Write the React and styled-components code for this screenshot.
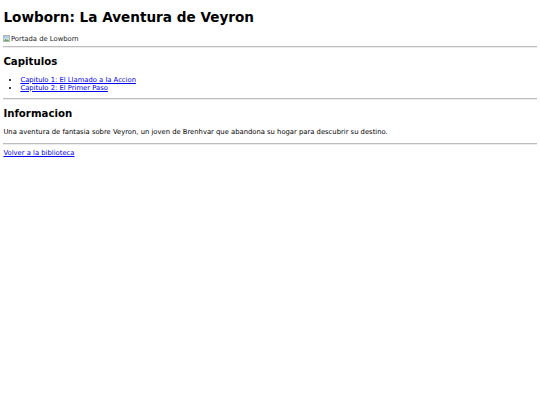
import React from "react";
import styled, { createGlobalStyle } from "styled-components";

// everything is the browser default page, shrunk to 0.425
const GlobalStyle = createGlobalStyle`
  html {
    background: #fff;
  }
  body {
    margin: 3.4px;
    font-family: "DejaVu Sans", Verdana, sans-serif;
    font-size: 6.8px;
    color: #000;
  }
`;

const Page = styled.div``;

const Title = styled.h1`
  font-size: 13.6px;
  font-weight: bold;
  margin: 6.1px 0 9.1px;
`;

const Cover = styled.div`
  display: flex;
  align-items: center;
  gap: 0.5px;
  height: 7.9px;
  color: #222;

  svg {
    flex: none;
  }
`;

const Rule = styled.hr`
  border: none;
  border-top: 1px solid #bdbdbd;
  border-bottom: 1px solid #ececec;
  margin: 3.4px 0;
`;

const Section = styled.h2`
  font-size: 10.2px;
  font-weight: bold;
  margin: 8.5px 0;
`;

const List = styled.ul`
  margin: 6.8px 0 5.8px;
  padding-left: 17px;
`;

const Link = styled.a`
  color: #0000ee;
  text-decoration: underline;
`;

const Text = styled.p`
  margin: 6.8px 0 7.8px;
`;

const BrokenIcon = () => (
  <svg width="7" height="7" viewBox="0 0 7 7">
    <rect x="0.5" y="0.5" width="6" height="6" fill="#f2f2f2" stroke="#b5b5b5" />
    <rect x="1" y="1" width="5" height="2.5" fill="#a9d0f0" />
    <path d="M1 6 L2.5 3.5 L4 5 L5 4 L6 6 Z" fill="#5aad5a" />
  </svg>
);

const App = () => {
  return (
    <Page>
      <GlobalStyle />
      <Title>Lowborn: La Aventura de Veyron</Title>
      <Cover>
        <BrokenIcon />
        <span>Portada de Lowborn</span>
      </Cover>
      <Rule />
      <Section>Capitulos</Section>
      <List>
        <li><Link href="#">Capitulo 1: El Llamado a la Accion</Link></li>
        <li><Link href="#">Capitulo 2: El Primer Paso</Link></li>
      </List>
      <Rule />
      <Section>Informacion</Section>
      <Text>Una aventura de fantasia sobre Veyron, un joven de Brenhvar que abandona su hogar para descubrir su destino.</Text>
      <Rule />
      <Link href="#">Volver a la biblioteca</Link>
    </Page>
  );
};

export default App;
